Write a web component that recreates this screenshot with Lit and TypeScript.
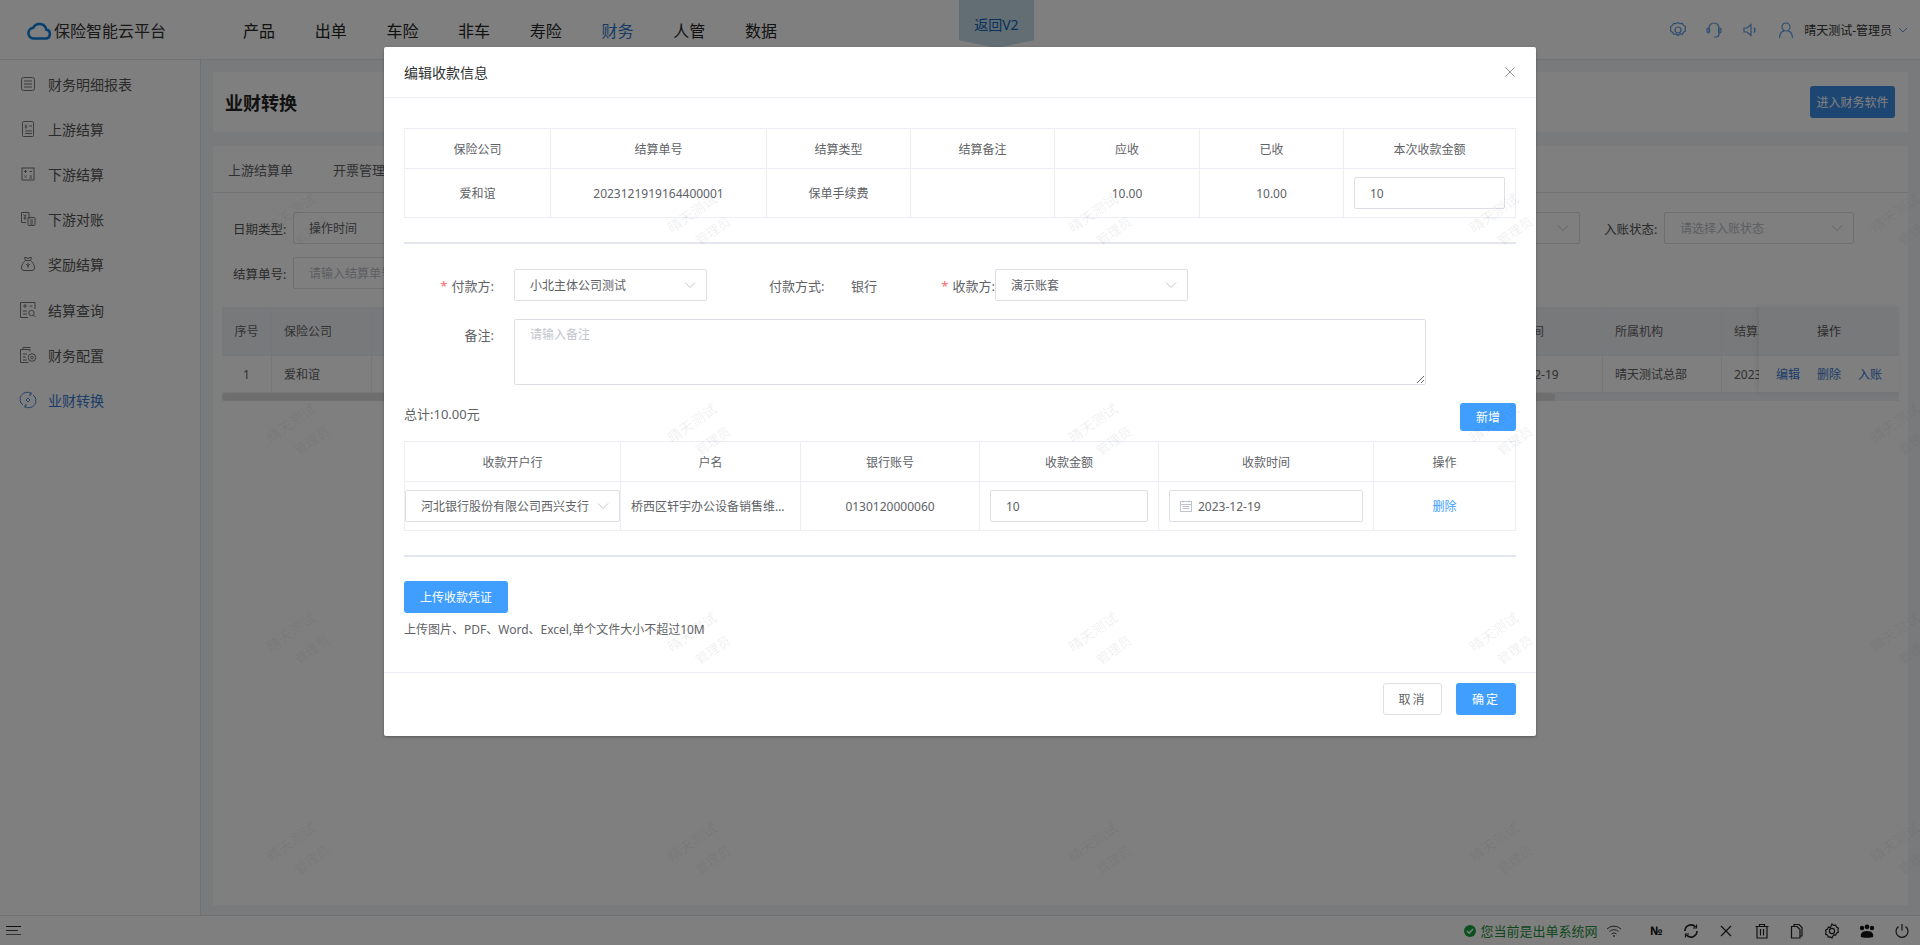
import { LitElement, html, css, svg } from "lit";
import { customElement } from "lit/decorators.js";

const chevron = html`<svg class="chev" width="12" height="12" viewBox="0 0 12 12"><path d="M1 3.5 6 8.5 11 3.5" fill="none" stroke="#c0c4cc" stroke-width="1"/></svg>`;

const navItems = ["产品", "出单", "车险", "非车", "寿险", "财务", "人管", "数据"];

const sideIcons = [
  svg`<rect x="2.5" y="2.5" width="13" height="13" rx="2"/><path d="M5 6h8M5 9h8M5 12h8"/>`,
  svg`<rect x="3.5" y="1.5" width="11" height="15" rx="1"/><path d="M6 4.5l1 1.2 1-1.2M7 5.7v3M5.7 7h2.6M10 6h3M6 11h7M6 13.5h7"/>`,
  svg`<rect x="3" y="3" width="12" height="12"/><path d="M5 6.5h3M6.5 5v3M10.5 6.5h2.500M5.500 10.500l2 2M7.500 10.500l-2 2M10.500 11h2.500M10.500 13h2.500"/>`,
  svg`<path d="M10 9V2.500H2.500v10H7M4.500 4.500l1.500 1.700 1.500-1.700M6 6.200V10M4.500 8h3"/><rect x="9" y="7.500" width="7" height="8" rx="1"/><path d="M11 10h3M11 12h3M11 14h3"/>`,
  svg`<path d="M6.500 5.500 5.500 2.500h1.500L9 3.500l2-1h1.500l-1 3c2.500 1.500 4 4.500 4 7.500 0 1.500-1 2.500-2.500 2.500H5c-1.500 0-2.500-1-2.500-2.500 0-3 1.500-6 4-7.500z"/><path d="M6.500 5.500h5M9 8v5M7 9l2 2 2-2"/>`,
  svg`<path d="M16 8V1.500H1.500v15H9"/><path d="M4 5h4M6 3v4M10.500 5h3M4 10h4M4 13h4"/><circle cx="12.500" cy="12" r="2.700"/><path d="M14.500 14l2 2"/>`,
  svg`<path d="M4 3.500V1.500h7.500M1.500 3.500h9.500v2M1.500 3.500v13h8M4 8h4M4 11h3M4 14h4"/><circle cx="13" cy="11.500" r="3.800"/><circle cx="13" cy="11.500" r="1.300"/>`,
  svg`<path d="M12 2.500A7 7 0 0 0 4 14M6 15.500A7 7 0 0 0 14 4M12 1v3h-2M6 17v-3h2"/><path d="M9 7l2 2-2 2-2-2z"/>`,
];

const sideItems = ["财务明细报表", "上游结算", "下游结算", "下游对账", "奖励结算", "结算查询", "财务配置", "业财转换"];

const wmCells = Array.from({ length: 20 });

const firstCols = ["保险公司", "结算单号", "结算类型", "结算备注", "应收", "已收", "本次收款金额"];
const secondCols = ["收款开户行", "户名", "银行账号", "收款金额", "收款时间", "操作"];

function sel(text: string, cls = "") {
  return html`<div class="sel ${cls}"><span class="sel-text">${text}</span>${chevron}</div>`;
}

@customElement("app-root")
export class AppRoot extends LitElement {
  static styles = css`
    :host {
      display: block;
      width: 100%;
      height: 100vh;
      position: relative;
      overflow: hidden;
      font-family: "Noto Sans", "Noto Sans CJK SC", sans-serif;
      font-size: 12px;
      color: #606266;
      background: #f3f4f7;
    }
    * { box-sizing: border-box; }
    .page { display: flex; flex-direction: column; height: 945px; }

    .topbar {
      height: 60px;
      flex: none;
      background: #fff;
      border-bottom: 1px solid #e4e6eb;
      display: flex;
      align-items: center;
      color: #222;
    }
    .logo { display: flex; align-items: center; width: 243px; padding-left: 26px; font-size: 16px; color: #333; gap: 2px; }
    .nav { display: flex; gap: 39.700px; font-size: 16px; }
    .nav .on { color: #2c74c8; }
    .back {
      margin-left: 182px;
      width: 75px;
      height: 48px;
      align-self: flex-start;
      background: #c5dbe8;
      color: #0f62b8;
      font-size: 14px;
      display: flex;
      align-items: center;
      justify-content: center;
      padding-bottom: 0;
      clip-path: polygon(0 0, 100% 0, 100% 84%, 50% 100%, 0 84%);
    }
    .tools { margin-left: auto; display: flex; align-items: center; padding-right: 12px; }
    .tool-ico { width: 36px; display: flex; justify-content: center; }
    .user-ico { display: flex; margin-left: -6px; margin-right: 8px; }
    .uname { font-size: 12px; color: #333; }
    .uchev { margin-left: 6px; display: flex; }

    .main { flex: 1; display: flex; min-height: 0; }
    .side { width: 201px; flex: none; background: #fff; border-right: 1px solid #dfe1e6; padding-top: 1px; }
    .side-item { height: 45.200px; display: flex; align-items: center; padding-left: 19px; gap: 11px; font-size: 14px; color: #555; }
    .side-item svg { fill: none; stroke: #777; stroke-width: 1; flex: none; }
    .side-item.on { color: #3578d0; }
    .side-item.on svg { stroke: #4a85d6; }

    .content { flex: 1; min-width: 0; padding: 12px 12px 10px; display: flex; flex-direction: column; gap: 14px; }
    .title-card { height: 60px; flex: none; background: #fff; display: flex; align-items: center; justify-content: space-between; padding: 0 13px 0 12px; }
    .title-card h2 { margin: 0; font-size: 18px; font-weight: 700; color: #222; }
    .soft-btn { height: 32px; width: 66px; }
    .soft-btn { width: 85px; padding: 0; border: 0; border-radius: 3px; background: #3d8de6; color: #fff; font: inherit; font-size: 12px; }
    .list-card { flex: 1; background: #fff; min-height: 0; }
    .tabs { height: 47px; border-bottom: 1px solid #e4e7ed; display: flex; align-items: center; padding-left: 15px; gap: 40px; font-size: 13px; color: #606266; }

    .filters { display: flex; gap: 24.200px; padding: 19px 0 0 20px; height: 51px; }
    .filters.next { padding-top: 0; height: 32px; margin-top: 13px; }
    .fitem { display: flex; width: 250px; flex: none; align-items: center; }
    .fitem label { width: 60px; padding-right: 8px; text-align: right; flex: none; font-size: 12.500px; color: #555; white-space: nowrap; }
    .fitem .sel { width: 190px; }

    .sel {
      height: 32px;
      background: #fff;
      border: 1px solid #dcdfe6;
      border-radius: 2px;
      display: flex;
      align-items: center;
      padding: 0 10px 0 15px;
      font-size: 12px;
      color: #606266;
    }
    .sel .sel-text { flex: 1; min-width: 0; white-space: nowrap; overflow: hidden; }
    .sel .chev { flex: none; margin-left: 8px; }
    .sel.ph, .ph { color: #b9bcc4; }

    .dtable { position: relative; margin: 18px 9px 0 9px; }
    .dt-row { display: grid; grid-template-columns: 50px 100px 1fr 119px 119px 177px; }
    .dt-row > div { border-right: 1px solid #ebeef5; border-bottom: 1px solid #ebeef5; display: flex; align-items: center; padding: 0 12px; color: #606266; white-space: nowrap; overflow: hidden; }
    .dt-row > div.mid { justify-content: center; padding: 0; }
    .dt-head > div { height: 49px; background: #f0f2f5; color: #666; }
    .dt-body > div { height: 37px; }
    .scroll { height: 8px; background: #f0f2f5; position: relative; }
    .thumb { position: absolute; left: 0; width: 1333px; top: 0; height: 8px; border-radius: 4px; background: #dcdcdc; }
    .fixed-col { position: absolute; right: 0; top: 0; width: 140px; background: #fff; box-shadow: -2px 0 6px rgba(0,0,0,.08); }
    .fixed-col .fh { height: 49px; background: #f0f2f5; border-bottom: 1px solid #ebeef5; display: flex; align-items: center; justify-content: center; color: #555; }
    .fixed-col .fb { height: 37px; display: flex; align-items: center; justify-content: center; gap: 17px; color: #3578d0; border-bottom: 1px solid #ebeef5; }

    .status { height: 30px; flex: none; border-top: 1px solid #e0e0e0; background: #fff; display: flex; align-items: center; padding-left: 6px; }
    .burger { display: flex; flex-direction: column; gap: 3px; width: 15px; }
    .burger i { display: block; height: 1px; background: #222; }
    .burger i:nth-child(2) { width: 12px; background: #444; }
    .burger i:nth-child(3) { background: #666; }
    .net { margin-left: auto; display: flex; align-items: center; gap: 3px; color: #1d8f3a; font-size: 13px; }
    .stat-icons { display: flex; align-items: center; margin-left: 17px; }
    .stat-ico { width: 35.200px; display: flex; justify-content: center; align-items: center; color: #111; font-size: 12px; font-weight: 700; }
    .stat-ico svg { fill: none; stroke: #222; stroke-width: 1.200; }

    .mask { position: absolute; inset: 0; background: rgba(0,0,0,.5); }
    .dialog {
      position: absolute;
      left: 384px;
      top: 47px;
      width: 1152px;
      height: 689px;
      background: #fff;
      border-radius: 2px;
      box-shadow: 0 1px 3px rgba(0,0,0,.3);
      display: flex;
      flex-direction: column;
    }
    .d-head { height: 51px; flex: none; border-bottom: 1px solid #ebeef5; display: flex; align-items: center; justify-content: space-between; padding: 0 21px 0 20px; font-size: 14px; color: #303133; }
    .d-body { flex: 1; padding: 30px 20px 0; min-height: 0; }
    .d-foot { height: 64px; flex: none; border-top: 1px solid #ebeef5; display: flex; justify-content: flex-end; align-items: flex-start; padding: 10px 20px 0 0; gap: 14px; }

    .tb { border-top: 1px solid #ebeef5; border-left: 1px solid #ebeef5; }
    .tb-row { display: grid; }
    .tb1 .tb-row { grid-template-columns: 146px 216px 144px 144px 145px 144px 172px; }
    .tb2 .tb-row { grid-template-columns: 216px 180px 179px 179px 215px 142px; }
    .cell { border-right: 1px solid #ebeef5; border-bottom: 1px solid #ebeef5; display: flex; align-items: center; justify-content: center; min-width: 0; padding: 0 10px; color: #606266; white-space: nowrap; }
    .hcell { height: 40px; }
    .bcell { height: 49px; }
    .tb .inp { width: 100%; }

    .inp { height: 32px; border: 1px solid #dcdfe6; border-radius: 2px; background: #fff; padding: 0 15px; font: inherit; font-size: 12px; color: #606266; outline: none; display: block; }
    .date { height: 32px; width: 100%; border: 1px solid #dcdfe6; border-radius: 2px; display: flex; align-items: center; padding-left: 10px; gap: 6px; color: #606266; }
    .ellip { display: block; overflow: hidden; text-overflow: ellipsis; width: 100%; }
    .link { color: #409eff; }

    .hr { height: 2px; background: #e4e6ee; }
    .hr.a { margin-top: 24px; }

    .form-row { display: flex; align-items: center; margin-top: 25px; }
    .flabel { width: 110px; flex: none; text-align: right; padding-right: 20px; font-size: 13px; color: #606266; white-space: nowrap; }
    .star { color: #f56c6c; margin-right: 4px; }
    .form-row .sel { width: 193px; font-size: 12px; }
    .pay-label { margin-left: 62px; font-size: 13px; width: 82px; white-space: nowrap; }
    .pay-val { font-size: 13px; width: 66px; white-space: nowrap; }
    .recv-label { width: 78px; white-space: nowrap; font-size: 13px; padding-right: 0; }
    .note-row { display: flex; margin-top: 18px; }
    .note-row .flabel { padding-top: 6px; }
    textarea {
      width: 912px;
      height: 66px;
      display: block;
      border: 1px solid #dcdfe6;
      border-radius: 2px;
      padding: 5px 15px;
      font: inherit;
      font-size: 12px;
      color: #606266;
      outline: none;
    }
    textarea::placeholder { color: #c0c4cc; }

    .sum-row { display: flex; justify-content: space-between; align-items: flex-start; margin-top: 18px; height: 38px; }
    .sum { font-size: 13px; color: #606266; margin-top: 1px; }
    .btn { border: 0; border-radius: 3px; background: #409eff; color: #fff; font: inherit; font-size: 12px; padding: 0; }
    .btn.add { width: 56px; height: 28px; }
    .btn.up { width: 104px; height: 32px; display: block; margin-top: 24px; }
    .btn.ok, .btn.no { width: 60px; height: 32px; letter-spacing: 2px; }
    .btn.no { background: #fff; border: 1px solid #dcdfe6; color: #606266; width: 59px; }
    .hint { margin-top: 7px; color: #606266; font-size: 12px; }

    .wm {
      position: absolute;
      inset: 0;
      pointer-events: none;
      display: grid;
      grid-template-columns: repeat(5, 401px);
      grid-auto-rows: 209.500px;
      padding: 119px 0 0 98px;
      overflow: hidden;
    }
    .wm div {
      display: flex;
      flex-direction: column;
      align-items: center;
      justify-content: center;
      gap: 8px;
      transform: rotate(-35deg);
      color: rgba(60, 60, 60, .09);
      font-size: 14px;
      line-height: 18px;
    }
    .wm span:last-child { margin-left: 14px; font-size: 13px; }
  `;

  renderFilters() {
    return html`
      <div class="filters">
        <div class="fitem"><label>日期类型:</label>${sel("操作时间")}</div>
        <div class="fitem"></div>
        <div class="fitem"></div>
        <div class="fitem"></div>
        <div class="fitem">${html`<label></label>`}${sel("")}</div>
        <div class="fitem"><label>入账状态:</label>${sel("请选择入账状态", "ph")}</div>
      </div>
      <div class="filters next">
        <div class="fitem"><label>结算单号:</label><div class="sel ph"><span class="sel-text">请输入结算单号</span></div></div>
      </div>
    `;
  }

  renderPage() {
    return html`
      <div class="page">
        <header class="topbar">
          <div class="logo">
            <svg width="26" height="22" viewBox="0 0 26 22"><path d="M7 19.500h12.500a4.500 4.500 0 0 0 .8-8.900A7 7 0 0 0 7.200 8.800 5.400 5.400 0 0 0 7 19.500z" fill="none" stroke="#0f7ed8" stroke-width="2.600"/></svg>
            <span>保险智能云平台</span>
          </div>
          <nav class="nav">${navItems.map((n) => html`<span class=${n === "财务" ? "on" : ""}>${n}</span>`)}</nav>
          <div class="back">返回V2</div>
          <div class="tools">
            <span class="tool-ico"><svg width="18" height="18" viewBox="0 0 18 18" fill="none" stroke="#5b9be0" stroke-width="1.200"><path d="M9 1.500l2 1.200 2.300-.3 1.200 2 2 1.200-.3 2.400.3 2-2 1.300-1.200 2-2.300-.3-2 1.500-2-1.500-2.300.3-1.200-2-2-1.300.3-2-.3-2.400 2-1.200 1.200-2 2.300.3z"/><circle cx="9" cy="9" r="3"/></svg></span>
            <span class="tool-ico"><svg width="18" height="18" viewBox="0 0 18 18" fill="none" stroke="#5b9be0" stroke-width="1.200"><path d="M4 11V7a5 5 0 0 1 10 0v6a3 3 0 0 1-3 3H9"/><rect x="2" y="7" width="2.500" height="5" rx="1.200"/><rect x="13.500" y="7" width="2.500" height="5" rx="1.200"/></svg></span>
            <span class="tool-ico"><svg width="18" height="18" viewBox="0 0 18 18" fill="none" stroke="#5b9be0" stroke-width="1.200"><path d="M3 7h3l4-3.500v11L6 11H3zM13 6.500a4 4 0 0 1 0 5"/></svg></span>
            <span class="tool-ico user-wrap"><svg width="18" height="18" viewBox="0 0 18 18" fill="none" stroke="#5b9be0" stroke-width="1.200"><circle cx="9" cy="6" r="4"/><path d="M2.500 17c0-4 2-6.500 4.500-7.200M15.500 17c0-4-2-6.500-4.500-7.200"/></svg></span>
            <span class="uname">晴天测试-管理员</span>
            <span class="uchev"><svg width="10" height="10" viewBox="0 0 10 10"><path d="M1 3l4 4 4-4" fill="none" stroke="#5b9be0"/></svg></span>
          </div>
        </header>
        <div class="main">
          <aside class="side">
            ${sideItems.map((n, i) => html`
              <div class="side-item ${i === 7 ? "on" : ""}">
                <svg width="18" height="18" viewBox="0 0 18 18">${sideIcons[i]}</svg>
                <span>${n}</span>
              </div>`)}
          </aside>
          <section class="content">
            <div class="title-card">
              <h2>业财转换</h2>
              <button class="soft-btn">进入财务软件</button>
            </div>
            <div class="list-card">
              <div class="tabs"><span>上游结算单</span><span>开票管理</span></div>
              ${this.renderFilters()}
              <div class="dtable">
                <div class="dt-row dt-head">
                  <div class="mid">序号</div><div>保险公司</div><div></div><div>操作时间</div><div>所属机构</div><div>结算单号</div>
                </div>
                <div class="dt-row dt-body">
                  <div class="mid">1</div><div>爱和谊</div><div></div><div>2023-12-19</div><div>晴天测试总部</div><div>2023121919164400001</div>
                </div>
                <div class="scroll"><div class="thumb"></div></div>
                <div class="fixed-col">
                  <div class="fh">操作</div>
                  <div class="fb"><span>编辑</span><span>删除</span><span>入账</span></div>
                </div>
              </div>
            </div>
          </section>
        </div>
        <footer class="status">
          <div class="burger"><i></i><i></i><i></i></div>
          <div class="net">
            <svg width="14" height="14" viewBox="0 0 14 14"><circle cx="7" cy="7" r="6" fill="#14a03c"/><path d="M4 7l2.200 2.200L10 5" fill="none" stroke="#fff" stroke-width="1.500"/></svg>
            <span>您当前是出单系统网</span>
            <svg style="margin-left:5px" width="16" height="14" viewBox="0 0 16 14" fill="none" stroke="#444"><path d="M1 5a10 10 0 0 1 14 0M3.500 7.500a6.500 6.500 0 0 1 9 0M5.500 10a3.500 3.500 0 0 1 5 0"/><circle cx="8" cy="12" r=".6"/></svg>
          </div>
          <div class="stat-icons">
            <span class="stat-ico">№</span>
            <span class="stat-ico"><svg width="16" height="16" viewBox="0 0 16 16"><path d="M2 8a6 6 0 0 1 10.500-4M14 8a6 6 0 0 1-10.500 4" stroke-width="1.600"/><path d="M13.500 1.500v3.500H10M2.500 14.500V11H6" stroke-width="1.200"/></svg></span>
            <span class="stat-ico"><svg width="14" height="14" viewBox="0 0 14 14"><path d="M2 2l10 10M12 2L2 12"/></svg></span>
            <span class="stat-ico"><svg width="16" height="16" viewBox="0 0 16 16"><path d="M1.500 3.500h13M5.500 3.500V1.500h5v2M3 3.500V15h10V3.500M6.500 6v6.500M9.500 6v6.500"/></svg></span>
            <span class="stat-ico"><svg width="16" height="16" viewBox="0 0 16 16"><path d="M5 3.500V1.500h5l3 3V13h-2M2.500 3.500H8l3 3V15H2.500z"/></svg></span>
            <span class="stat-ico"><svg width="16" height="16" viewBox="0 0 16 16"><path d="M8 1l1.600 1.400 2.100-.3.800 2 1.900 1-.5 2 .5 2-1.900 1-.8 2-2.100-.3L8 15l-1.600-1.200-2.100.3-.8-2-1.900-1 .5-2-.5-2 1.900-1 .8-2 2.100.3z"/><circle cx="8" cy="8" r="2.600"/></svg></span>
            <span class="stat-ico"><svg width="16" height="14" viewBox="0 0 16 14"><g fill="#111" stroke="none"><circle cx="3" cy="4" r="2.200"/><circle cx="8" cy="2.800" r="2.400"/><circle cx="13" cy="4" r="2.200"/><path d="M2 13c-1-3 1-6 6-6s7 3 6 6c-1 1-11 1-12 0z"/></g></svg></span>
            <span class="stat-ico"><svg width="16" height="16" viewBox="0 0 16 16"><path d="M8 1v6.500M4.500 3.500a6 6 0 1 0 7 0"/></svg></span>
          </div>
        </footer>
      </div>
    `;
  }

  renderDialog() {
    return html`
      <div class="dialog">
        <div class="d-head">
          <span>编辑收款信息</span>
          <svg width="10" height="10" viewBox="0 0 10 10"><path d="M.5.500l9 9M9.500.500l-9 9" stroke="#909399" fill="none"/></svg>
        </div>
        <div class="d-body">
          <div class="tb tb1">
            <div class="tb-row">${firstCols.map((c) => html`<div class="cell hcell">${c}</div>`)}</div>
            <div class="tb-row">
              <div class="cell bcell">爱和谊</div>
              <div class="cell bcell">2023121919164400001</div>
              <div class="cell bcell">保单手续费</div>
              <div class="cell bcell"></div>
              <div class="cell bcell">10.00</div>
              <div class="cell bcell">10.00</div>
              <div class="cell bcell"><input class="inp" .value=${"10"} /></div>
            </div>
          </div>
          <div class="hr a"></div>
          <div class="form-row">
            <div class="flabel"><span class="star">*</span>付款方:</div>
            ${sel("小北主体公司测试")}
            <div class="pay-label">付款方式:</div>
            <div class="pay-val">银行</div>
            <div class="flabel recv-label"><span class="star">*</span>收款方:</div>
            ${sel("演示账套")}
          </div>
          <div class="note-row">
            <div class="flabel">备注:</div>
            <textarea placeholder="请输入备注"></textarea>
          </div>
          <div class="sum-row">
            <div class="sum">总计:10.00元</div>
            <button class="btn add">新增</button>
          </div>
          <div class="tb tb2">
            <div class="tb-row">${secondCols.map((c) => html`<div class="cell hcell">${c}</div>`)}</div>
            <div class="tb-row">
              <div class="cell bcell">${sel("河北银行股份有限公司西兴支行", "in-cell")}</div>
              <div class="cell bcell"><span class="ellip">桥西区轩宇办公设备销售维修中心</span></div>
              <div class="cell bcell">0130120000060</div>
              <div class="cell bcell"><input class="inp" .value=${"10"} /></div>
              <div class="cell bcell">
                <div class="date">
                  <svg width="12" height="12" viewBox="0 0 12 12" fill="none" stroke="#c0c4cc"><rect x=".5" y="1.500" width="11" height="10"/><path d="M.5 4.500h11M3 .5v2M9 .5v2M2.500 6.500h7M2.500 8.500h7"/></svg>
                  <span>2023-12-19</span>
                </div>
              </div>
              <div class="cell bcell link">删除</div>
            </div>
          </div>
          <div class="hr a"></div>
          <button class="btn up">上传收款凭证</button>
          <div class="hint">上传图片、PDF、Word、Excel,单个文件大小不超过10M</div>
        </div>
        <div class="d-foot">
          <button class="btn no">取消</button>
          <button class="btn ok">确定</button>
        </div>
      </div>
    `;
  }

  render() {
    return html`
      ${this.renderPage()}
      <div class="mask"></div>
      ${this.renderDialog()}
      <div class="wm">${wmCells.map(() => html`<div><span>晴天测试</span><span>管理员</span></div>`)}</div>
    `;
  }
}
